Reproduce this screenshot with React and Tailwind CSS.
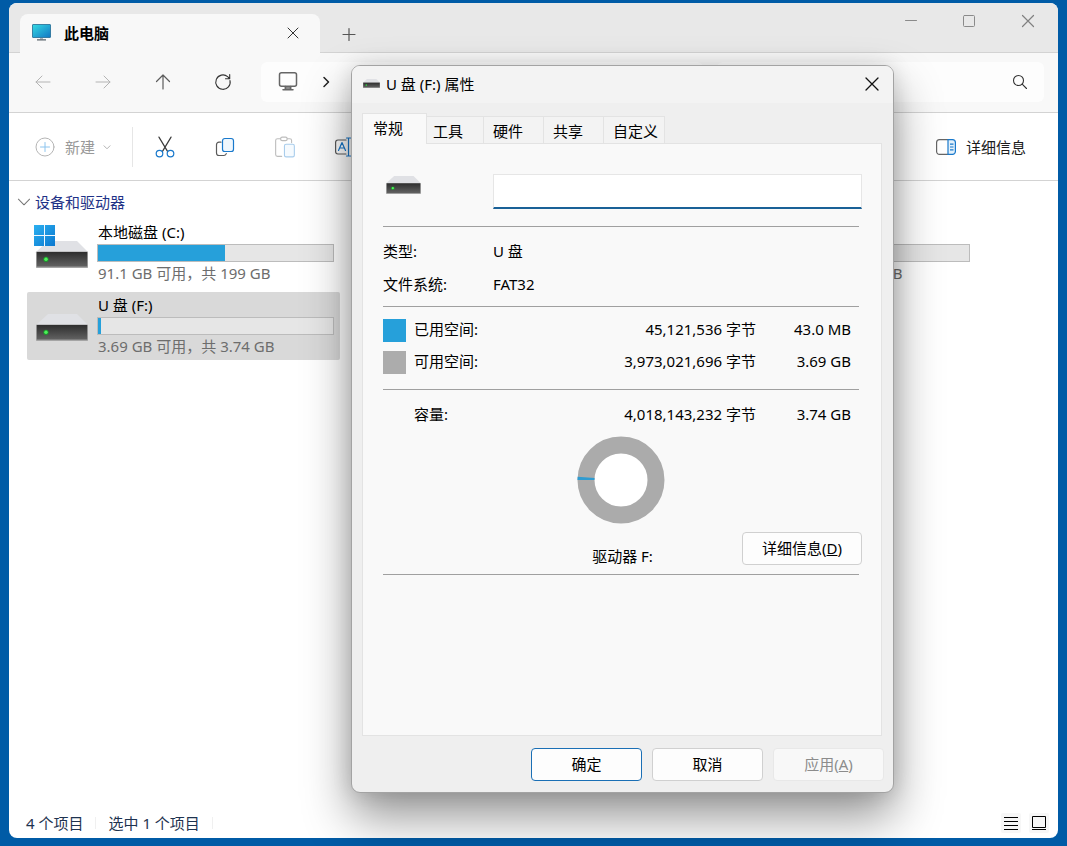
import React from 'react';

const drives = [
    { id: 'c', name: '本地磁盘 (C:)', used: 54, info: '91.1 GB 可用，共 199 GB', system: true },
    { id: 'e', name: '本地磁盘 (E:)', used: 40, info: '119 GB 可用，共 199 GB', column: 'col-start-3' },
    { id: 'f', name: 'U 盘 (F:)', used: 1.1, info: '3.69 GB 可用，共 3.74 GB', selected: true },
];

const tabs = [
    { id: 'tools', label: '工具', width: 'w-[57px] pl-[6px]' },
    { id: 'hardware', label: '硬件', width: 'w-[60px] pl-[9px]' },
    { id: 'sharing', label: '共享', width: 'w-[60px] pl-[9px]' },
    { id: 'custom', label: '自定义', width: 'w-[61px] pl-[9px]' },
];

function DriveIcon({ id, className = '' }) {
    return (
        <svg viewBox="0 0 52 27" className={className} aria-hidden="true">
            <defs>
                <linearGradient id={`front-${id}`} x1="0" y1="0" x2="0" y2="1">
                    <stop offset="0" stopColor="#2e2e2e" />
                    <stop offset="1" stopColor="#626262" />
                </linearGradient>
            </defs>
            <path d="M12 0h29l11 11H0z" fill="#e0e1e5" />
            <rect y="10.5" width="52" height="16.5" rx="0.8" fill="#a4a4a4" />
            <rect x="0.8" y="11" width="50.4" height="14.6" fill={`url(#front-${id})`} />
            <circle cx="10" cy="18.3" r="2.6" fill="#1d9a2c" />
            <circle cx="10" cy="18.3" r="1.7" fill="#4df05a" />
        </svg>
    );
}

function SystemDriveIcon() {
    return (
        <svg viewBox="0 0 54 43" className="w-[54px] h-[43px]" aria-hidden="true">
            <defs>
                <linearGradient id="win" x1="0" y1="0" x2="1" y2="1">
                    <stop offset="0" stopColor="#2bb0f0" />
                    <stop offset="1" stopColor="#0b78d0" />
                </linearGradient>
                <linearGradient id="front-system" x1="0" y1="0" x2="0" y2="1">
                    <stop offset="0" stopColor="#2e2e2e" />
                    <stop offset="1" stopColor="#626262" />
                </linearGradient>
            </defs>
            <path d="M14 16h29l11 11H2z" fill="#e0e1e5" />
            <rect x="2" y="26.5" width="52" height="16.5" rx="0.8" fill="#a4a4a4" />
            <rect x="2.8" y="27" width="50.4" height="14.6" fill="url(#front-system)" />
            <circle cx="12" cy="34.3" r="2.6" fill="#1d9a2c" />
            <circle cx="12" cy="34.3" r="1.7" fill="#4df05a" />
            <rect width="21" height="21" fill="#f1f8fd" />
            <path d="M0 0h10v10H0zM11 0h10v10H11zM0 11h10v10H0zM11 11h10v10H11z" fill="url(#win)" />
        </svg>
    );
}

function Icon({ size = 'w-5 h-5', stroke = '#555', width = 1, children }) {
    return (
        <svg viewBox="0 0 20 20" className={`${size} shrink-0`} fill="none" stroke={stroke} strokeWidth={width} strokeLinecap="round" strokeLinejoin="round" aria-hidden="true">
            {children}
        </svg>
    );
}

function TitleBar() {
    return (
        <header className="flex h-[50px] shrink-0 bg-[#e8e8e8] pl-[11px] shadow-[inset_0_-1px_0_#d3d3d3]">
            <div className="flex items-center w-[300px] mt-[11px] pb-[2px] pl-3 pr-[17px] bg-[#f8f8f8] rounded-t-lg">
                <svg viewBox="0 0 19 17" className="w-[19px] h-[17px]" aria-hidden="true">
                    <defs>
                        <linearGradient id="screen" x1="0" y1="0" x2="1" y2="1">
                            <stop offset="0" stopColor="#35dbe3" />
                            <stop offset="1" stopColor="#1276c4" />
                        </linearGradient>
                    </defs>
                    <rect x="0.5" y="0.5" width="18" height="13" rx="0.5" fill="url(#screen)" stroke="#216b93" strokeWidth="0.8" />
                    <path d="M8 14h3v1.5H8z" fill="#aab4bc" />
                    <path d="M5 15.2h9v1.2H5z" fill="#5a646c" />
                </svg>
                <h1 className="ml-[13px] flex-1 font-bold text-black">此电脑</h1>
                <button aria-label="关闭标签页" className="w-5 h-5">
                    <Icon stroke="#333"><path d="M5 5l10 10M15 5L5 15" /></Icon>
                </button>
            </div>
            <button aria-label="新建标签页" className="ml-[19px] mt-[11px]">
                <Icon stroke="#555" width={1.2}><path d="M4 10.5h12M10 4.5v12" /></Icon>
            </button>
            <div className="ml-auto flex h-9">
                <button aria-label="最小化" className="w-[58px] flex items-center justify-center">
                    <Icon stroke="#8a8a8a"><path d="M4.5 9.5h11" /></Icon>
                </button>
                <button aria-label="最大化" className="w-[58px] flex items-center justify-center">
                    <Icon stroke="#8a8a8a"><rect x="4.5" y="4.5" width="11" height="11" rx="1" /></Icon>
                </button>
                <button aria-label="关闭" className="w-[60px] flex items-center justify-center">
                    <Icon stroke="#808080" width={1.2}><path d="M4.5 4.5l11 11M15.5 4.5l-11 11" /></Icon>
                </button>
            </div>
        </header>
    );
}

function NavBar() {
    const item = 'w-[60px] flex items-center justify-center';
    return (
        <nav className="flex items-center h-[60px] shrink-0 bg-[#f8f8f8] border-b border-[#d3d3d3] pb-[2px] pl-1 pr-[14px]">
            <button aria-label="后退" className={item} disabled>
                <Icon stroke="#b4b4b4"><path d="M17 10H3M9 4l-6 6 6 6" /></Icon>
            </button>
            <button aria-label="前进" className={item} disabled>
                <Icon stroke="#b4b4b4"><path d="M3 10h14M11 4l6 6-6 6" /></Icon>
            </button>
            <button aria-label="向上" className={item}>
                <Icon stroke="#5c5c5c" width={1.2}><path d="M10 17V3M3.5 9.500L10 3l6.500 6.500" /></Icon>
            </button>
            <button aria-label="刷新" className={item}>
                <Icon stroke="#333" width={1.1}><path d="M17 8.500a7.200 7.200 0 1 1-2.400-3.900L16.500 6.500M16.700 2.500v4.200h-4.200" /></Icon>
            </button>
            <div className="ml-2 flex-1 h-10 flex items-center bg-[#fdfdfd] rounded-md pl-[17px]">
                <Icon stroke="#666" width={1.5}>
                    <rect x="1.500" y="0.800" width="17" height="13.500" rx="2" />
                    <path d="M7.500 14.500v3M12.500 14.500v3M5 17.800h10M7 16h6" />
                </Icon>
                <button aria-label="展开路径" className="ml-[18px]">
                    <Icon stroke="#222" width={1.5}><path d="M8 5.500l4.500 4.500L8 14.500" /></Icon>
                </button>
            </div>
            <div className="ml-[14px] w-[327px] h-10 flex items-center bg-[#fdfdfd] rounded-md pr-[14px]">
                <input type="search" aria-label="搜索" className="flex-1 min-w-0 h-full bg-transparent outline-none pl-3" />
                <Icon stroke="#333" width={1.1}><circle cx="8.500" cy="8.500" r="5" /><path d="M12.200 12.200l4.300 4.300" /></Icon>
            </div>
        </nav>
    );
}

function CommandBar() {
    const item = 'w-[60px] flex items-center justify-center';
    return (
        <div className="flex items-center h-[68px] shrink-0 bg-white border-b border-[#d3d3d3] pl-[26px] pr-8">
            <button className="flex items-center text-[#999]" disabled>
                <Icon stroke="#b5b5b5">
                    <circle cx="10" cy="10" r="9" />
                    <path d="M10 5.500v9M5.500 10h9" stroke="#8cc4ee" />
                </Icon>
                <span className="ml-[10px]">新建</span>
                <Icon size="ml-[6px] w-3 h-3" stroke="#aaa" width={1.5}><path d="M5 8l5 5 5-5" /></Icon>
            </button>
            <span className="ml-[19px] mr-[2px] w-px h-10 bg-[#e6e6e6]" />
            <button aria-label="剪切" className={item}>
                <Icon size="w-[22px] h-[22px]" stroke="#3c3c3c" width={1.1}>
                    <path d="M4.500 1l7.800 13M15.500 1L7.700 14" />
                    <circle cx="5" cy="16" r="3" stroke="#1979cc" width={1.4} />
                    <circle cx="15" cy="16" r="3" stroke="#1979cc" />
                </Icon>
            </button>
            <button aria-label="复制" className={item}>
                <Icon stroke="#5a5a5a" width={1.2}>
                    <path d="M6 5.200H4A2.500 2.500 0 0 0 1.500 7.700v8.300A2.500 2.500 0 0 0 4 18.500h5a2.500 2.500 0 0 0 2.300-2" />
                    <rect x="7.500" y="1.500" width="11" height="13" rx="2.300" stroke="#1979cc" fill="#f0f7fd" />
                </Icon>
            </button>
            <button aria-label="粘贴" className={item} disabled>
                <Icon size="w-[22px] h-[22px]" stroke="#bdbdbd">
                    <path d="M6 2.500H3.200A1.700 1.700 0 0 0 1.500 4.200v12.600a1.700 1.700 0 0 0 1.700 1.700H7M12 2.500h2.300A1.700 1.700 0 0 1 16 4.200V6" />
                    <rect x="6" y="1" width="6" height="3.200" rx="1.500" />
                    <rect x="9.500" y="7.500" width="9" height="11.500" rx="1.500" stroke="#a9cdec" fill="#f5fafe" />
                </Icon>
            </button>
            <button aria-label="重命名" className={item}>
                <Icon stroke="#5a5a5a" width={1.2}>
                    <path d="M11 3H3A2.500 2.500 0 0 0 .6 5.500v9A2.500 2.500 0 0 0 3 17h8" />
                    <path d="M3.500 13.500L7 5.500l3.500 8M4.800 11h4.400M13.500 1v18M11.500 1h4M11.500 19h4" stroke="#1979cc" />
                </Icon>
            </button>
            <button className="ml-auto flex items-center text-[#1b1b1b]">
                <svg viewBox="0 0 20 16" className="w-5 h-4" fill="none" strokeWidth="1.2" aria-hidden="true">
                    <path d="M12 .6H3.500A2.900 2.900 0 0 0 .6 3.500v9a2.900 2.900 0 0 0 2.900 2.900H12" stroke="#666" />
                    <path d="M12 .6h4.500a2.900 2.900 0 0 1 2.900 2.900v9a2.900 2.900 0 0 1-2.900 2.900H12z" stroke="#1979cc" fill="#e3f1fb" />
                    <path d="M14 5.200h3.500M14 8h3.500M14 10.800h3.500" stroke="#1979cc" />
                </svg>
                <span className="ml-[10px]">详细信息</span>
            </button>
        </div>
    );
}

function DriveTile({ drive }) {
    return (
        <li className={`flex items-start h-[68px] pl-[7px] pr-[6px] rounded-[2px] ${drive.column || ''} ${drive.selected ? 'bg-[#d9d9d9]' : ''}`}>
            <div className="w-[54px] h-[49px] shrink-0 flex items-end justify-end">
                {drive.system ? <SystemDriveIcon /> : <DriveIcon id={drive.id} className="w-[52px] h-[27px]" />}
            </div>
            <div className="ml-[9px] flex-1 min-w-0 pt-[3px] leading-5">
                <p className="pl-px pb-[2px] text-black">{drive.name}</p>
                <div className="h-[18px] bg-[#e6e6e6] border border-[#bcbcbc]">
                    <div className="h-full bg-[#26a0da]" style={{ width: `${drive.used}%` }} />
                </div>
                <p className="pl-px pt-px text-[#6d6d6d]">{drive.info}</p>
            </div>
        </li>
    );
}

function StatusBar() {
    return (
        <footer className="flex items-center h-[30px] shrink-0 pl-[17px] pr-[9px] text-[#1e3350]">
            <span>4 个项目</span>
            <span className="ml-3 w-px h-3 bg-[#f0f0f0]" />
            <span className="ml-3">选中 1 个项目</span>
            <span className="ml-3 w-px h-3 bg-[#f0f0f0]" />
            <button aria-label="详细信息视图" className="ml-auto bg-[#f7f7f7] rounded-[2px]">
                <svg viewBox="0 0 20 20" className="w-5 h-5" stroke="#000"><path d="M3 4.500h14M3 8.500h14M3 12.500h14M3 16.500h14" /></svg>
            </button>
            <button aria-label="大图标视图" className="ml-2 bg-[#f7f7f7] rounded-[2px]">
                <svg viewBox="0 0 20 20" className="w-5 h-5" stroke="#000" fill="none"><path d="M3.500 3.500h13v11h-13zM3 16.500h14" /></svg>
            </button>
        </footer>
    );
}

function Rule() {
    return <hr className="mr-[3px] border-0 h-px bg-[#a0a0a0]" />;
}

function SpaceTable({ rows, className }) {
    return (
        <table className={`w-full table-fixed ${className}`}>
            <tbody>
                {rows.map(row => (
                    <tr key={row.label} className="h-8">
                        <td className="w-[31px] p-0"><div className={`w-[23px] h-[23px] ${row.color}`} /></td>
                        <th scope="row" className="p-0 pb-[2px] text-left font-normal">{row.label}</th>
                        <td className="w-[180px] p-0 pb-[2px] text-right">{row.bytes}</td>
                        <td className="w-[106px] p-0 pb-[2px] pr-[11px] text-right">{row.size}</td>
                    </tr>
                ))}
            </tbody>
        </table>
    );
}

// 1.1% of the ring, starting at nine o'clock
function UsageRing() {
    const length = 2 * Math.PI * 35;
    return (
        <svg viewBox="0 0 88 88" className="mx-auto w-[88px] h-[88px]" fill="none" strokeWidth="17" role="img" aria-label="已用空间">
            <circle cx="44" cy="44" r="27" fill="#fff" />
            <circle cx="44" cy="44" r="35" stroke="#ababab" />
            <circle cx="44" cy="44" r="35" stroke="#2f9bd0" strokeDasharray={`${length * 0.012} ${length}`} transform="rotate(180 44 44)" />
        </svg>
    );
}

function PropertiesDialog() {
    const button = 'w-[111px] h-[33px] pb-[2px] rounded-[4px] border';
    return (
        <section role="dialog" aria-label="U 盘 (F:) 属性" className="absolute left-[351px] top-[65px] w-[543px] rounded-[9px] border border-[#a3a3a3] bg-[#efefef] shadow-[0_0_20px_rgba(0,0,0,0.12),0_24px_48px_rgba(0,0,0,0.42)] text-black leading-[22px]">
            <div className="flex items-center h-[37px] rounded-t-lg bg-[#f3f3f3] pb-[2px] px-[11px]">
                <DriveIcon id="title" className="w-[17px] h-[9px]" />
                <h2 className="ml-[6px] flex-1">U 盘 (F:) 属性</h2>
                <button aria-label="关闭" className="w-5 h-5">
                    <Icon stroke="#111" width={1.3}><path d="M4 4l12 12M16 4L4 16" /></Icon>
                </button>
            </div>

            <div className="pl-[10px] pr-[11px] pt-[10px]">
                <div role="tablist" className="flex items-end">
                    <button role="tab" aria-selected="true" className="relative z-10 -mb-px w-[65px] h-[31px] pl-[10px] pb-[2px] text-left bg-[#f9f9f9] border border-b-0 border-[#e3e3e3]">常规</button>
                    {tabs.map(tab => (
                        <button key={tab.id} role="tab" aria-selected="false" className={`${tab.width} h-[27px] pt-[2px] text-left bg-[#f3f3f3] border border-l-0 border-b-0 border-[#e3e3e3]`}>{tab.label}</button>
                    ))}
                </div>
                <div role="tabpanel" className="bg-[#f9f9f9] border border-[#e3e3e3] pl-5 pr-[19px] pt-[30px] pb-[160px]">
                    <div className="flex items-start h-[35px]">
                        <DriveIcon id="panel" className="ml-[3px] mt-[2px] w-[35px] h-[18px]" />
                        <input type="text" aria-label="卷标" className="ml-auto w-[369px] h-full px-2 bg-white border border-b-2 border-[#e6e6e6] border-b-[#1a6197] outline-none" />
                    </div>
                    <div className="h-[17px]" />
                    <Rule />
                    <dl className="grid grid-cols-[110px_1fr] pt-2 pb-[5px] leading-[33px]">
                        <dt>类型:</dt>
                        <dd>U 盘</dd>
                        <dt>文件系统:</dt>
                        <dd>FAT32</dd>
                    </dl>
                    <Rule />
                    <SpaceTable
                        className="mt-[7px] mb-[11px]"
                        rows={[
                            { label: '已用空间:', bytes: '45,121,536 字节', size: '43.0 MB', color: 'bg-[#26a0da]' },
                            { label: '可用空间:', bytes: '3,973,021,696 字节', size: '3.69 GB', color: 'bg-[#acacac]' },
                        ]}
                    />
                    <Rule />
                    <SpaceTable
                        className="mt-[9px] mb-[5px]"
                        rows={[{ label: '容量:', bytes: '4,018,143,232 字节', size: '3.74 GB', color: '' }]}
                    />
                    <div className="pr-1"><UsageRing /></div>
                    <div className="mt-2 mb-[9px] grid grid-cols-[1fr_auto_1fr] items-end">
                        <p className="col-start-2 leading-[18px]">驱动器 F:</p>
                        <button className="justify-self-end w-[120px] h-[33px] pb-[2px] rounded-[4px] border border-[#d0d0d0] bg-[#fdfdfd]">详细信息(<u>D</u>)</button>
                    </div>
                    <Rule />
                </div>
            </div>

            <div className="flex justify-end gap-[10px] pt-3 pb-[11px] pr-[9px]">
                <button className={`${button} border-[#1a6fb5] bg-[#fdfdfd]`}>确定</button>
                <button className={`${button} border-[#d0d0d0] bg-[#fdfdfd]`}>取消</button>
                <button className={`${button} border-[#e8e8e8] bg-[#f8f8f8] text-[#8c8c8c]`} disabled>应用(<u>A</u>)</button>
            </div>
        </section>
    );
}

export default function App() {
    return (
        <div className="relative flex flex-col min-h-screen bg-[#005ba6] px-[9px] pt-[3px] pb-2 text-[15px] leading-[22px] font-['Noto_Sans','Noto_Sans_CJK_SC',sans-serif]">
            <main className="flex-1 flex flex-col bg-white rounded-lg overflow-hidden">
                <TitleBar />
                <NavBar />
                <CommandBar />
                <div className="flex-1 pl-[18px]">
                    <h2 className="-ml-[10px] flex items-center pt-[10px] pb-[6px] text-[#1e3287]">
                        <Icon size="w-[14px] h-[14px]" stroke="#777" width={1.5}><path d="M2 6l8 8 8-8" /></Icon>
                        <span className="ml-1">设备和驱动器</span>
                    </h2>
                    <ul className="grid grid-cols-[repeat(auto-fill,313px)] gap-[5px]">
                        {drives.map(drive => <DriveTile key={drive.id} drive={drive} />)}
                    </ul>
                </div>
                <StatusBar />
            </main>
            <PropertiesDialog />
        </div>
    );
}
